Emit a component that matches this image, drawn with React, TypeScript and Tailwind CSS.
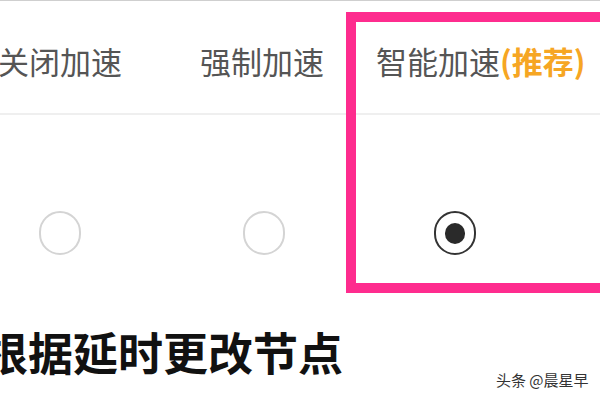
import React from "react";

const cjk = { fontFamily: '"Noto Sans CJK SC", "Noto Sans", sans-serif' };

function Radio({ checked }: { checked?: boolean }) {
  return (
    <div
      className={
        "w-[42px] h-[44px] rounded-full flex items-center justify-center shrink-0 " +
        (checked ? "border-[2px] border-[#333]" : "border-[2px] border-[#d4d4d4]")
      }
    >
      {checked && <div className="w-[20px] h-[21px] rounded-full bg-[#2a2a2a]" />}
    </div>
  );
}

export default function App() {
  return (
    <div className="relative w-[600px] h-[400px] overflow-hidden bg-white" style={cjk}>
      <div className="h-px bg-[#cfcfcf]" />
      <div className="flex items-center h-[112px] pt-[8px] text-[31px] text-[#555] whitespace-nowrap">
        <span className="ml-[-2px] w-[202px]">关闭加速</span>
        <span className="w-[176px]">强制加速</span>
        <span>
          智能加速<span className="text-[#f6a623] font-bold">(推荐)</span>
        </span>
      </div>
      <div className="h-[2px] bg-[#efefef]" />
      <div className="flex pt-[96px] pl-[39px]">
        <Radio />
        <div className="ml-[162px]">
          <Radio />
        </div>
        <div className="ml-[149px]">
          <Radio checked />
        </div>
      </div>
      <div className="mt-[74px] ml-[-17px] text-[45px] leading-[45px] font-bold text-[#111] whitespace-nowrap">
        根据延时更改节点
      </div>
      <div className="absolute left-[496px] top-[369px] text-[15px] text-[#333] whitespace-nowrap">
        头条 @晨星早
      </div>
      <div className="absolute left-[346px] top-[12px] w-[300px] h-[281px] border-[10px] border-[#fe2c8e]" />
    </div>
  );
}
